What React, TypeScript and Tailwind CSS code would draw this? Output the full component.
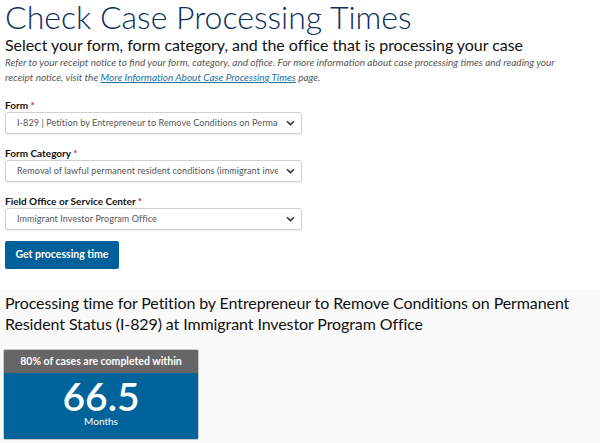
import React from "react";

const Chevron = () => (
  <svg width="9" height="6" viewBox="0 0 9 6" className="shrink-0">
    <path d="M1 1.2 L4.5 4.6 L8 1.2" fill="none" stroke="#333" strokeWidth="1.6" />
  </svg>
);

const Select = ({ text }: { text: string }) => (
  <div className="flex h-[22px] w-[297px] items-center justify-between rounded-[3px] border border-[#d0d0d0] bg-white pl-[11px] pr-[6px] shadow-[0_1px_1px_rgba(0,0,0,0.08)]">
    <span className="overflow-hidden whitespace-nowrap text-[9px] tracking-[0.1px] text-[#555]">{text}</span>
    <span className="ml-[8px] flex items-center"><Chevron /></span>
  </div>
);

const Label = ({ text }: { text: string }) => (
  <div className="mb-0 text-[10px] font-bold leading-[13px] text-[#111]">
    {text} <span className="text-[#d62d2d]">*</span>
  </div>
);

export default function App() {
  return (
    <div className="h-[443px] w-[600px] overflow-hidden bg-white font-['Lato',_sans-serif]">
      <div className="px-[5px]">
        <h1 className="text-[32px] font-light leading-[34px] text-[#0e2f5c]">Check Case Processing Times</h1>
        <h2 className="mt-[1px] whitespace-nowrap text-[16px] tracking-[-0.05px] leading-[20px] text-[#111]">
          Select your form, form category, and the office that is processing your case
        </h2>
        <p className="mt-[0px] pr-[40px] text-[10px] italic leading-[15px] text-[#555]">
          Refer to your receipt notice to find your form, category, and office. For more information about case processing times and reading your receipt notice, visit the{" "}
          <span className="text-[#1a6fa0] underline">More Information About Case Processing Times</span> page.
        </p>
        <div className="mt-[14px] flex flex-col gap-[13px]">
          <div>
            <Label text="Form" />
            <Select text="I-829 | Petition by Entrepreneur to Remove Conditions on Permanent Resident Status" />
          </div>
          <div>
            <Label text="Form Category" />
            <Select text="Removal of lawful permanent resident conditions (immigrant investors)" />
          </div>
          <div>
            <Label text="Field Office or Service Center" />
            <Select text="Immigrant Investor Program Office" />
          </div>
        </div>
        <div className="mt-[11px] flex h-[28px] w-[114px] items-center justify-center rounded-[2px] bg-[#00609a] text-[10.5px] font-bold text-white">
          Get processing time
        </div>
      </div>
      <div className="mt-[20px] bg-[#fafafa] px-[5px] pb-[10px] pt-[3px]">
        <h3 className="pr-[20px] text-[16px] tracking-[-0.1px] leading-[21px] text-[#111]">
          Processing time for Petition by Entrepreneur to Remove Conditions on Permanent Resident Status (I-829) at Immigrant Investor Program Office
        </h3>
        <div className="ml-[-2px] mt-[15px] w-[196px] overflow-hidden rounded-[2px] border border-[#c8c8c8]">
          <div className="flex h-[23px] items-center justify-center bg-[#666] text-[10.5px] font-bold text-white">
            80% of cases are completed within
          </div>
          <div className="flex h-[66px] flex-col items-center bg-[#00649a] pt-[4px] text-white">
            <div className="text-[39px] font-semibold leading-[38px]">66.5</div>
            <div className="text-[10px] leading-[12px]">Months</div>
          </div>
        </div>
      </div>
    </div>
  );
}
